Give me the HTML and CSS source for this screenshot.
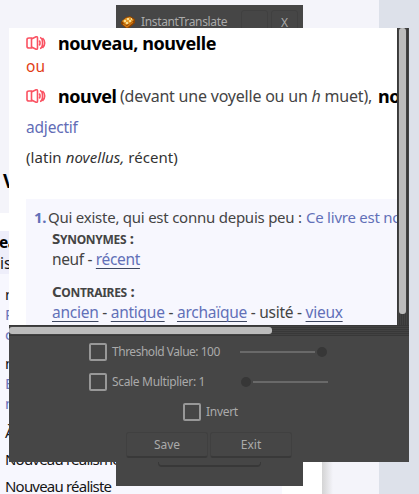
FILE: index.html
```html
<!DOCTYPE html>
<html lang="fr">
<head>
<meta charset="utf-8">
<title>InstantTranslate</title>
<link rel="stylesheet" href="styles.css">
</head>
<body>
<svg width="0" height="0" class="defs"><defs>
<symbol id="speaker" viewBox="0 0 20 14"><path d="M1 3.500Q1 2 3 2H5.500V12H3Q1 12 1 10.500ZM5.500 3L10 .8Q11.500 .4 11.500 2V12Q11.500 13.600 10 13.200L5.500 11M13.300 4.500Q14.800 7 13.300 9.500M14 1.500Q16.500 2 16.500 7T14 12.500M16.500 2Q18.700 4 18.700 7T16.500 12" fill="none" stroke="#fa5262" stroke-width="1.600"/></symbol>
</defs></svg>
<main class="desktop">
  <div class="site">
    <div class="band top"></div>
    <div class="list">
      <div class="entry"><b>ea</b><span>is</span></div>
      <div class="words">
        <p class="gap1">n</p><p class="blue">P</p><p class="blue">c</p>
        <p class="gap2">n</p><p class="blue">É</p><p class="blue">n</p>
        <p class="gap2">À</p><p class="gap3">Nouveau réalisme</p><p class="gap3">Nouveau réaliste</p>
      </div>
    </div>
    <b class="heading">V</b>
  </div>
  <div class="gutter"></div>
  <div class="side"></div>

  <section class="window back">
    <header>
      <svg class="logo" viewBox="0 0 16 14"><path d="M1 7L6 2 10 1 15 4V8L9 13H6L1 9Z" fill="#8b4300"/><path d="M2 6L6 3 10 2 14 5 9 9 6 10Z" fill="#e59a2c"/><path d="M4 6h2M7 4h2M9 6h2M6 8h2M11 4h1" stroke="#fff2b0" stroke-width="1.500"/><path d="M3 9l4 3 6-5" fill="none" stroke="#d57b15" stroke-width="1.300"/></svg>
      <span>InstantTranslate</span><i></i><i>X</i>
    </header>
    <div class="ghost"></div>
  </section>

  <section class="window front">
    <div class="view">
      <article>
        <p class="l1"><svg class="spk"><use href="#speaker"/></svg><b class="title">nouveau, nouvelle</b></p>
        <p class="ou">ou</p>
        <p class="l3"><svg class="spk"><use href="#speaker"/></svg><b class="title t2">nouvel</b><span class="note">(devant une voyelle ou un <em>h</em> muet),</span><b class="title">no</b></p>
        <p class="adj">adjectif</p>
        <p class="latin">(latin <em>novellus,</em> récent)</p>
        <div class="def">
          <p class="sense"><b>1.</b><span class="q">Qui existe, qui est connu depuis peu :</span><span class="ex">Ce livre est nouveau</span></p>
          <div class="sub">
            <p class="caps">S<small>YNONYMES</small> :</p>
            <p class="links">neuf - <a>récent</a></p>
            <p class="caps c2">C<small>ONTRAIRES</small> :</p>
            <p class="links k2"><a>ancien</a> - <a>antique</a> - <a>archaïque</a> - usité - <a>vieux</a></p>
          </div>
        </div>
      </article>
      <div class="vbar"><div></div></div>
    </div>
    <div class="hbar"><div></div></div>
    <div class="controls">
      <div class="row"><i class="check"></i><span class="w1">Threshold Value: 100</span><div class="slider high"><u></u><s></s></div></div>
      <div class="row"><i class="check"></i><span class="w2">Scale Multiplier: 1</span><div class="slider low"><s></s><u></u></div></div>
      <div class="row invert"><i class="check"></i><span>Invert</span></div>
      <div class="buttons"><button>Save</button><button>Exit</button></div>
    </div>
  </section>
</main>
</body>
</html>
```
FILE: styles.css
```css
* { box-sizing: border-box; }
body, p { margin: 0; }
.defs { display: block; }
.desktop { position: relative; display: flex; width: 419px; height: 494px; overflow: hidden; background: #f4f4fa; font: 15.500px/20px "Noto Sans", sans-serif; }
p { height: 20px; white-space: nowrap; }
.site { position: relative; width: 322px; height: 494px; background: #fff; overflow: hidden; color: #161616; }
.top { height: 213px; background: #f4f4fa; }
.heading { position: absolute; left: 3px; top: 171px; font-size: 19px; color: #000; }
.list { margin-top: 18px; width: 282px; height: 263px; background: #f7f7fe; }
.entry { height: 43px; padding-top: 1px; background: #eeeefa; display: flex; flex-direction: column; }
.entry b { margin-left: -1px; height: 21px; color: #000; letter-spacing: -.5px; }
.words { padding-left: 5px; font-size: 15px; letter-spacing: -.8px; }
.gap1 { margin-top: 10px; }
.gap2 { margin-top: 9px; }
.gap3 { margin-top: 7px; }
.blue { color: #6b75ba; }
.gutter { width: 57px; margin-top: 213px; background: linear-gradient(90deg, #d4d4d5 0, #dcdcde 3px, #f4f4fa 11px); }
.side { width: 40px; background: #dde1ea; }
.window { position: absolute; background: #464646; color: #aaa; }
.back { left: 116px; top: 5px; width: 187px; height: 481px; }
.back header { display: flex; align-items: center; height: 34px; padding-left: 4px; font-size: 12px; }
.logo { width: 16px; height: 14px; margin-right: 5px; }
.back header span { width: 100px; letter-spacing: -.35px; }
.back header i { width: 27px; height: 25px; margin-right: 3px; border: 1px solid #404040; border-radius: 3px; text-align: center; font-style: normal; line-height: 24px; }
.ghost { width: 103px; height: 34px; margin: 394px 0 0 42px; border: 1px solid #383838; border-width: 1px 1px 2px; border-radius: 4px; }
.front { left: 9px; top: 28px; width: 400px; height: 434px; }
.view { display: flex; height: 297px; }
article { width: 388px; height: 297px; overflow: hidden; background: #fff; padding-left: 17px; color: #444; }
.l1, .l3 { display: flex; align-items: center; }
.l1 { margin-top: 5px; }
.spk { width: 20px; height: 14px; margin-right: 12px; flex: none; }
.title { font-size: 18px; color: #000; letter-spacing: -.42px; }
.t2 { width: 62px; flex: none; }
.note { width: 258px; flex: none; font-size: 16px; letter-spacing: -.21px; }
.ou { margin-top: 3px; color: #e23d14; }
.l3 { margin-top: 10px; }
.adj { margin-top: 11px; color: #626cb6; letter-spacing: -.2px; }
.latin { margin-top: 10px; font-size: 15px; letter-spacing: .06px; color: #333; }
.def { margin-top: 32px; height: 130px; padding: 8px 0 0 8px; background: #f7f7fe; }
.sense { display: flex; font-size: 15px; letter-spacing: -.24px; }
.sense b { width: 14px; flex: none; }
.q { width: 258px; flex: none; }
.sense b, .ex, a { color: #6270b8; }
.sub { padding-left: 18px; }
.caps { margin-top: 1px; font-weight: 700; font-size: 15px; letter-spacing: -.3px; }
.caps small { font-size: 12px; }
.links { margin-top: 1px; letter-spacing: -.35px; }
.k2 { letter-spacing: -.26px; }
.c2 { margin-top: 12px; }
a { text-decoration: underline; text-decoration-color: #3d4660; text-underline-offset: 3px; text-decoration-thickness: 1px; text-decoration-skip-ink: none; }
.vbar { width: 12px; padding-left: 2px; background: repeating-linear-gradient(90deg, #393939 0 1px, #424242 1px 2px); }
.vbar div { width: 7px; height: 286px; border-radius: 3px; background: #bcbcbc; }
.hbar { height: 11px; padding-top: 2px; background: repeating-linear-gradient(#383838 0 1px, #424242 1px 2px); }
.hbar div { width: 263px; height: 7px; border-radius: 3px; background: #bcbcbc; }
.controls { font-size: 12px; }
.row { display: flex; align-items: center; height: 30px; padding-left: 80px; }
.controls .row:first-child { margin-top: 1px; }
.check { width: 18px; height: 18px; border: 2px solid #989898; border-radius: 2px; margin-right: 5px; }
.w1, .w2 { width: 128px; letter-spacing: -.48px; }
.w2 { letter-spacing: -.33px; }
.slider { display: flex; align-items: center; width: 88px; justify-content: space-between; }
.high { width: 87px; }
.low { padding-left: 1px; }
.slider u { width: 75px; height: 2px; background: #696969; }
.slider s { width: 10px; height: 10px; border-radius: 50%; background: #373737; }
.invert { padding-left: 174px; letter-spacing: -.3px; }
.buttons { display: flex; gap: 2px; padding: 5px 0 0 117px; }
button { width: 82px; height: 26px; padding: 0; border: 1px solid #404040; border-bottom: 2px solid #393939; border-radius: 3px; background: #464646; color: #aaa; font: 12px "Noto Sans", sans-serif; }
```
